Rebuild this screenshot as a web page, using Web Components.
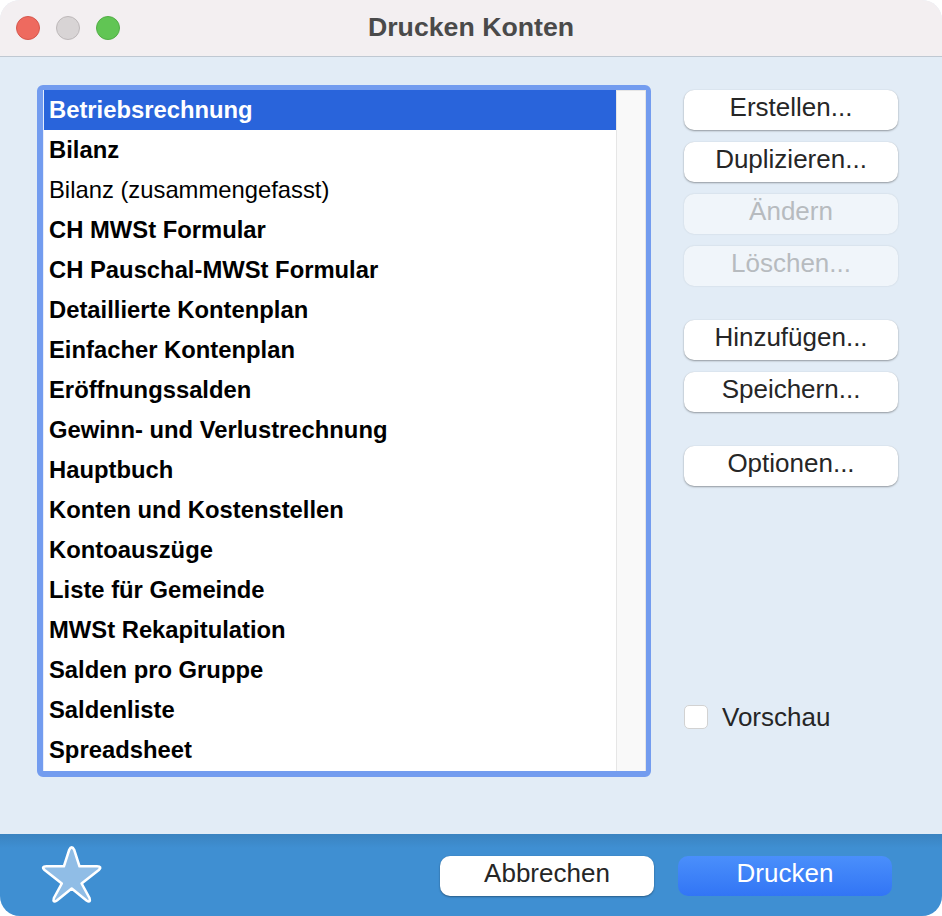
<!DOCTYPE html>
<html lang="de">
<head>
<meta charset="utf-8">
<title>Drucken Konten</title>
<style>
  html, body { margin: 0; height: 100%; background: #fff; }
  body { font-family: "Liberation Sans", Arial, sans-serif; }
</style>
</head>
<body>

<template id="window-tpl">
  <style>
    :host {
      display: flex;
      flex-direction: column;
      width: 942px;
      height: 916px;
      overflow: hidden;
      border-radius: 20px;
      background: #e2ecf6;
    }
    .titlebar {
      flex: none;
      height: 56px;
      display: flex;
      align-items: center;
      position: relative;
      background: #f3eff1;
      border-bottom: 1px solid #bfc8d2;
    }
    .lights { display: flex; gap: 16px; padding-left: 16px; }
    .light { width: 22px; height: 22px; border-radius: 50%; border: 1px solid; }
    .red { background: #ee6a5f; border-color: #d5574d; }
    .grey { background: #d8d4d5; border-color: #bdb8b9; }
    .green { background: #61c554; border-color: #52ad46; }
    h1 {
      position: absolute;
      left: 0; right: 0; top: 12px;
      margin: 0;
      text-align: center;
      font-size: 26.7px;
      line-height: 30px;
      font-weight: 700;
      color: #4a4a4a;
    }
    .body {
      flex: 1;
      display: flex;
      padding: 28px 44px 0 37px;
      min-height: 0;
    }
    .side {
      flex: none;
      width: 214px;
      margin-left: 33px;
      padding-top: 5px;
      height: 690px;
      display: flex;
      flex-direction: column;
    }
    .footer {
      flex: none;
      height: 82px;
      box-sizing: border-box;
      display: flex;
      align-items: flex-start;
      padding: 22px 50px 0 41px;
      background: linear-gradient(#3a83c0, #3f8fd2 14px);
    }
    .footer svg { flex: none; margin-top: -11px; }
    .actions { margin-left: auto; display: flex; gap: 24px; }
  </style>
  <div class="titlebar">
    <div class="lights">
      <span class="light red"></span><span class="light grey"></span><span class="light green"></span>
    </div>
    <h1><slot name="title"></slot></h1>
  </div>
  <div class="body">
    <slot name="list"></slot>
    <div class="side"><slot name="side"></slot></div>
  </div>
  <div class="footer">
    <svg width="62" height="62" viewBox="0 0 62 62">
      <path d="M28.2 4.8Q30.7 0 33.2 4.8L38.5 21.3L56 21.3Q61.5 21.3 57.8 25L40.6 38.5L48.5 53Q50 58.5 45.5 55.5L30.7 43.5L15.9 55.5Q11.4 58.5 12.9 53L20.8 38.5L3.6 25Q-.1 21.3 5.4 21.3L22.9 21.3Z"
        fill="#90bde6" stroke="#fff" stroke-width="2.6" stroke-linejoin="round"/>
    </svg>
    <div class="actions"><slot name="actions"></slot></div>
  </div>
</template>

<template id="list-tpl">
  <style>
    :host {
      display: block;
      flex: none;
      box-sizing: border-box;
      width: 614px;
      height: 692px;
      border: solid #739cef;
      border-width: 5px 5px 6px 6px;
      border-radius: 6px;
      background: #fff;
    }
    .box { display: flex; height: 100%; box-sizing: border-box; border-left: 1px solid #e6edfb; }
    .rows { flex: 1; min-width: 0; display: flex; flex-direction: column; }
    .scroll {
      flex: none;
      width: 30px;
      box-sizing: border-box;
      background: #f9f9f9;
      border: solid #e6e6e6;
      border-width: 1px 1px 0 1px;
    }
  </style>
  <div class="box">
    <div class="rows"><slot></slot></div>
    <div class="scroll"></div>
  </div>
</template>

<template id="row-tpl">
  <style>
    :host {
      display: block;
      flex: none;
      height: 40px;
      padding-left: 5px;
      font-size: 23.8px;
      line-height: 40px;
      font-weight: 700;
      color: #000;
      white-space: nowrap;
    }
    :host([plain]) { font-weight: 400; }
    :host([selected]) { background: #2964db; color: #fff; }
  </style>
  <slot></slot>
</template>

<template id="button-tpl">
  <style>
    :host {
      display: block;
      flex: none;
      box-sizing: border-box;
      width: 214px;
      height: 40px;
      border-radius: 10px;
      background: #fff;
      box-shadow: 0 1px 2px rgba(0,0,0,.35), 0 0 1px rgba(0,0,0,.12);
      color: #262626;
      font-size: 26px;
      line-height: 35px;
      text-align: center;
      white-space: nowrap;
    }
    :host([disabled]) {
      background: #f0f5fa;
      color: #b7bbbf;
      box-shadow: 0 0 2px rgba(0,0,0,.12);
    }
    :host([primary]) {
      background: linear-gradient(#4a8ffb, #3275f5);
      color: #fff;
      box-shadow: none;
    }
  </style>
  <slot></slot>
</template>

<template id="check-tpl">
  <style>
    :host {
      display: flex;
      align-items: center;
      gap: 14px;
      font-size: 26px;
      line-height: 30px;
      color: #262626;
    }
    .box {
      flex: none;
      box-sizing: border-box;
      width: 24px;
      height: 24px;
      background: #fff;
      border: 1px solid #d2d2d2;
      border-radius: 5px;
    }
  </style>
  <span class="box"></span><slot></slot>
</template>

<app-window>
  <span slot="title">Drucken Konten</span>
  <report-list slot="list">
    <report-row selected>Betriebsrechnung</report-row>
    <report-row>Bilanz</report-row>
    <report-row plain>Bilanz (zusammengefasst)</report-row>
    <report-row>CH MWSt Formular</report-row>
    <report-row>CH Pauschal-MWSt Formular</report-row>
    <report-row>Detaillierte Kontenplan</report-row>
    <report-row>Einfacher Kontenplan</report-row>
    <report-row>Eröffnungssalden</report-row>
    <report-row>Gewinn- und Verlustrechnung</report-row>
    <report-row>Hauptbuch</report-row>
    <report-row>Konten und Kostenstellen</report-row>
    <report-row>Kontoauszüge</report-row>
    <report-row>Liste für Gemeinde</report-row>
    <report-row>MWSt Rekapitulation</report-row>
    <report-row>Salden pro Gruppe</report-row>
    <report-row>Saldenliste</report-row>
    <report-row>Spreadsheet</report-row>
  </report-list>
  <mac-button slot="side">Erstellen...</mac-button>
  <mac-button slot="side" style="margin-top:12px">Duplizieren...</mac-button>
  <mac-button slot="side" style="margin-top:12px" disabled>Ändern</mac-button>
  <mac-button slot="side" style="margin-top:12px" disabled>Löschen...</mac-button>
  <mac-button slot="side" style="margin-top:34px">Hinzufügen...</mac-button>
  <mac-button slot="side" style="margin-top:12px">Speichern...</mac-button>
  <mac-button slot="side" style="margin-top:34px">Optionen...</mac-button>
  <mac-check slot="side" style="margin-top:auto;margin-bottom:48px">Vorschau</mac-check>
  <mac-button slot="actions">Abbrechen</mac-button>
  <mac-button slot="actions" primary>Drucken</mac-button>
</app-window>

<script>
  // all elements just clone their template into an open shadow root
  const tags = {
    'app-window': 'window-tpl',
    'report-list': 'list-tpl',
    'report-row': 'row-tpl',
    'mac-button': 'button-tpl',
    'mac-check': 'check-tpl',
  };
  for (const [tag, id] of Object.entries(tags)) {
    customElements.define(tag, class extends HTMLElement {
      constructor() {
        super();
        this.attachShadow({ mode: 'open' });
        this.shadowRoot.appendChild(document.getElementById(id).content.cloneNode(true));
      }
    });
  }
</script>
</body>
</html>
